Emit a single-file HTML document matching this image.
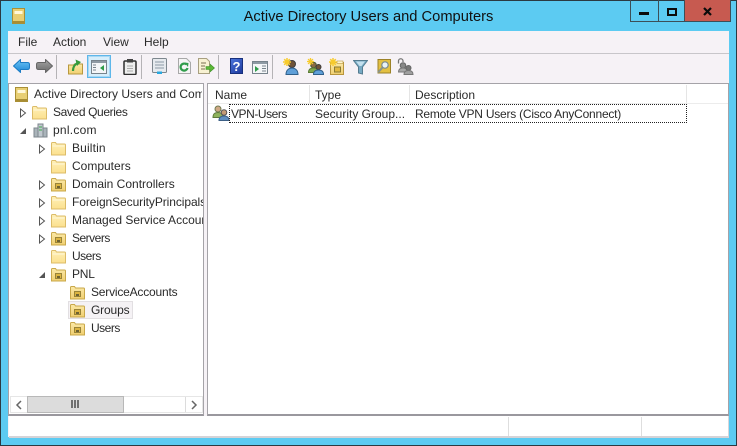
<!DOCTYPE html>
<html><head><meta charset="utf-8"><style>
html,body{margin:0;padding:0;width:737px;height:446px;overflow:hidden}
body{position:relative;background:#5ccbf2;font-family:"Liberation Sans",sans-serif;font-size:12px;color:#2a2a2a;filter:blur(.3px)}
.a,.t,svg{position:absolute}
.t{white-space:nowrap;line-height:16px;height:16px}
</style></head><body>
<svg width="0" height="0" style="left:0;top:0"><defs>
<linearGradient id="fg" x1="0" y1="0" x2="0" y2="1"><stop offset="0" stop-color="#fff0b8"/><stop offset="1" stop-color="#fbe08e"/></linearGradient>
<linearGradient id="og" x1="0" y1="0" x2="0" y2="1"><stop offset="0" stop-color="#fbe9a8"/><stop offset="1" stop-color="#f0cf70"/></linearGradient>
<linearGradient id="bl" x1="0" y1="0" x2="0" y2="1"><stop offset="0" stop-color="#6cc4f6"/><stop offset="1" stop-color="#1c86d6"/></linearGradient>
<linearGradient id="gr" x1="0" y1="0" x2="0" y2="1"><stop offset="0" stop-color="#a4a4a4"/><stop offset="1" stop-color="#6a6a6a"/></linearGradient>
<symbol id="f" viewBox="0 0 15 15"><path d="M.5 14V2.500q0-1 1-1h3l1 1.500h8q1 0 1 1V14z" fill="url(#fg)" stroke="#dcbc68"/><path d="M1.500 5h12" stroke="#fff8da"/></symbol>
<symbol id="o" viewBox="0 0 15 15"><path d="M.5 14V2.500q0-1 1-1h3l1 1.500h8q1 0 1 1V14z" fill="url(#og)" stroke="#c9a84a"/><rect x="4.500" y="6.500" width="6" height="5" fill="#dcb440" stroke="#9a8438"/><rect x="6" y="9" width="3" height="2" fill="#6e6232"/></symbol>
<symbol id="g" viewBox="0 0 18 16"><circle cx="6" cy="4" r="3" fill="#cfa985" stroke="#6f7a50"/><path d="M1 12.500c0-4 2-5 5-5s5 1 5 5z" fill="#8fb35c" stroke="#5f7a3c"/><circle cx="12" cy="7.500" r="2.800" fill="#c49a75" stroke="#555"/><path d="M7 15.500c0-3.500 2-4.500 5-4.500s5 1 5 4.500z" fill="#5f8fc0" stroke="#3c5f85"/></symbol>
<symbol id="s" viewBox="0 0 8 8"><path d="M4 0v8M0 4h8M1.200 1.200l5.600 5.600M6.800 1.200l-5.600 5.600" stroke="#f7cb2e" stroke-width="1.500"/></symbol>
</defs></svg>

<div class="a" style="left:0;top:0;width:737px;height:1px;background:#2b3a42"></div>
<div class="a" style="left:0;top:0;width:1px;height:446px;background:#2b3a42"></div>
<div class="a" style="left:736px;top:0;width:1px;height:446px;background:#2b3a42"></div>
<div class="a" style="left:0;top:445px;width:737px;height:1px;background:#2b3a42"></div>

<!-- title bar -->
<svg style="left:12px;top:8px" width="13" height="16" viewBox="0 0 13 16"><rect x=".5" y=".5" width="12" height="15" fill="#e8cf73" stroke="#a98f35"/><rect x="2.500" y="3" width="8" height="3" fill="#fff8d8"/><rect x="1" y="13" width="11" height="2" fill="#a88d33"/></svg>
<div class="t" style="left:0;top:8px;width:737px;text-align:center;font-size:14.700px;line-height:18px;height:18px;color:#111">Active Directory Users and Computers</div>
<div class="a" style="left:684px;top:0;width:47px;height:22px;background:#c75a50"></div>
<div class="a" style="left:630px;top:0;width:101px;height:22px;border:1px solid #3c4f58;border-top:0;box-sizing:border-box"></div>
<div class="a" style="left:658px;top:0;width:1px;height:21px;background:#3c4f58"></div>
<div class="a" style="left:684px;top:0;width:1px;height:21px;background:#3c4f58"></div>
<div class="a" style="left:639px;top:12px;width:10px;height:3px;background:#0c0c0c"></div>
<div class="a" style="left:667px;top:8px;width:10px;height:8px;border:2px solid #0c0c0c;box-sizing:border-box"></div>
<svg style="left:703px;top:7px" width="9" height="9" viewBox="0 0 9 9"><path d="M1 1l7 7M8 1L1 8" stroke="#0c0c0c" stroke-width="2.200"/></svg>

<!-- client -->
<div class="a" style="left:8px;top:31px;width:721px;height:406px;background:#f6f2f6"></div>
<!-- menu -->
<div class="t" style="left:18px;top:34px">File</div>
<div class="t" style="left:53px;top:34px">Action</div>
<div class="t" style="left:103px;top:34px">View</div>
<div class="t" style="left:144px;top:34px">Help</div>
<div class="a" style="left:8px;top:53px;width:721px;height:1px;background:#c8c6ca"></div>

<!-- toolbar -->
<svg style="left:13px;top:59px" width="17" height="14" viewBox="0 0 17 14"><path d="M.5 7L7.500.5v3h7q2 0 2 2v3q0 2-2 2h-7v3z" fill="url(#bl)" stroke="#1c7cc4" stroke-linejoin="round"/></svg>
<svg style="left:36px;top:59px" width="17" height="14" viewBox="0 0 17 14"><path d="M16.500 7L9.500.5v3h-7q-2 0-2 2v3q0 2 2 2h7v3z" fill="url(#gr)" stroke="#666" stroke-linejoin="round"/></svg>
<div class="a" style="left:56px;top:55px;width:1px;height:24px;background:#b5b3b6"></div>
<svg style="left:68px;top:59px" width="15" height="16" viewBox="0 0 15 16"><path d="M.5 15V6h5l1-1h8v10z" fill="url(#og)" stroke="#b8983e"/><path d="M5 12c0-4 2-7 5-8" fill="none" stroke="#359a3d" stroke-width="2.200"/><path d="M7.500.5L13 3 9 7z" fill="#359a3d"/></svg>
<div class="a" style="left:87px;top:55px;width:24px;height:23px;background:#d6eefb;border:1px solid #5eb7ea;outline:1px solid #a8d8f4;outline-offset:-2px;box-sizing:border-box"></div>
<svg style="left:91px;top:60px" width="16" height="14" viewBox="0 0 16 14"><rect x=".5" y=".5" width="15" height="13" fill="#f4f6f8" stroke="#77838c"/><rect x="1" y="1" width="14" height="2" fill="#8e9aa4"/><path d="M2 5h3M2 7.500h3M2 10h3" stroke="#77838c"/><path d="M13 5v6L9 8z" fill="#2f9c4a"/></svg>
<svg style="left:123px;top:59px" width="14" height="16" viewBox="0 0 14 16"><rect x="1" y="2" width="12" height="13.500" rx="1" fill="#eee" stroke="#2e2e2e" stroke-width="1.500"/><rect x="4" y="0" width="6" height="3.500" fill="#444"/><path d="M4 7h6M4 9.500h6M4 12h6" stroke="#aaa"/></svg>
<div class="a" style="left:141px;top:55px;width:1px;height:24px;background:#b5b3b6"></div>
<svg style="left:152px;top:58px" width="15" height="16" viewBox="0 0 15 16"><rect x=".5" y=".5" width="14" height="14" rx="1" fill="#e6eaee" stroke="#7d878e"/><path d="M3 4h9M3 7h9M3 10h9" stroke="#8c9aa6"/><rect x="5" y="13.500" width="5" height="2.500" fill="#28a8e0"/></svg>
<svg style="left:178px;top:58px" width="13" height="16" viewBox="0 0 13 16"><path d="M.5.500h8l4 4v11H.500z" fill="#f5f5f5" stroke="#a8a8a8"/><path d="M9.500 10a3.500 3.500 0 1 1-1-3.500" fill="none" stroke="#2f9c4a" stroke-width="2.200"/><path d="M6.500 4.500l4 .5-.5 4z" fill="#2f9c4a"/></svg>
<svg style="left:198px;top:58px" width="17" height="16" viewBox="0 0 17 16"><path d="M.5.500h8l3 3v12h-11z" fill="#f7f1d2" stroke="#a89f80"/><path d="M3 5h5M3 8h4M3 11h4" stroke="#7a7050"/><path d="M8 8.500h4V6l4.500 4-4.500 4v-2.500H8z" fill="#5cb838" stroke="#3f8f28" stroke-width=".6"/></svg>
<div class="a" style="left:218px;top:55px;width:1px;height:24px;background:#b5b3b6"></div>
<div class="a" style="left:230px;top:58px;width:13px;height:16px;background:linear-gradient(135deg,#4a74dc,#1f3a9c);border:1px solid #18307c;box-sizing:border-box;color:#fff;font:bold 13px/15px 'Liberation Sans',sans-serif;text-align:center">?</div>
<svg style="left:252px;top:61px" width="16" height="13" viewBox="0 0 16 13"><rect x=".5" y=".5" width="15" height="12" fill="#f4f6f8" stroke="#77838c"/><rect x="1" y="1" width="14" height="2" fill="#8e9aa4"/><path d="M3 5v6l4-3z" fill="#2f9c4a"/><path d="M10 5h4M10 7.500h4M10 10h4" stroke="#77838c"/></svg>
<div class="a" style="left:272px;top:55px;width:1px;height:24px;background:#b5b3b6"></div>
<svg style="left:283px;top:58px" width="16" height="17" viewBox="0 0 16 17"><circle cx="9" cy="6" r="3.500" fill="#6f5238" stroke="#3c3c3c"/><path d="M3 16.500c0-4.500 3-6.500 6-6.500s6 2 6 6.500z" fill="#5f9fd8" stroke="#2f5f8a"/><use href="#s" x="0" y="0" width="8" height="8"/></svg>
<svg style="left:307px;top:58px" width="17" height="17" viewBox="0 0 17 17"><circle cx="6.500" cy="7" r="2.800" fill="#8a6a45" stroke="#4a5a30"/><path d="M1.500 14.500c0-3 2-4.500 5-4.500s5 1.500 5 4.500z" fill="#7fa84e" stroke="#5a7a34"/><circle cx="11.500" cy="9" r="2.500" fill="#6f5238" stroke="#3c3c3c"/><path d="M6.500 16.500c0-3 2-4.500 5-4.500s5 1.500 5 4.500z" fill="#5f9fd8" stroke="#2f5f8a"/><use href="#s" x="0" y="0" width="7" height="7"/></svg>
<svg style="left:329px;top:58px" width="16" height="17" viewBox="0 0 16 17"><path d="M1.500 16.500V4.500h13v12z" fill="url(#og)" stroke="#b8953c"/><rect x="8" y="3" width="6" height="2.500" fill="#fff6d0" stroke="#b8953c" stroke-width=".6"/><rect x="5.500" y="9" width="6" height="5" fill="#e2b93f" stroke="#8a7a34"/><use href="#s" x="0" y="0" width="8" height="8"/></svg>
<svg style="left:353px;top:60px" width="15" height="15" viewBox="0 0 15 15"><path d="M.5.500h14L9.500 7v7l-4-1V7z" fill="#77aac4" stroke="#557c90"/><path d="M3 1.500h9L8.500 6h-2z" fill="#c4e0ee"/></svg>
<svg style="left:377px;top:59px" width="14" height="15" viewBox="0 0 14 15"><rect x="1" y=".5" width="12.500" height="13.500" fill="#e3c042" stroke="#9c8228"/><circle cx="8" cy="6" r="3.200" fill="#eaf3f6" stroke="#7a8a92" stroke-width="1.200"/><path d="M5.500 8.500L1 13.500" stroke="#8a9488" stroke-width="2"/></svg>
<svg style="left:397px;top:58px" width="17" height="17" viewBox="0 0 17 17"><path d="M1.500 5.500V3a2.200 2.200 0 0 1 4.500 0v1" fill="none" stroke="#777" stroke-width="1.300"/><circle cx="6" cy="7.500" r="2.800" fill="#888" stroke="#666"/><path d="M1.500 14c0-3 2-4 4.500-4s4.500 1 4.500 4z" fill="#a8a8a8" stroke="#777"/><circle cx="11.500" cy="10" r="2.500" fill="#777" stroke="#666"/><path d="M7 16.500c0-3 2-4 4.500-4s4.500 1 4.500 4z" fill="#a0a0a0" stroke="#777"/></svg>

<!-- panels -->
<div class="a" style="left:8px;top:83px;width:196px;height:333px;background:#fff;border:1px solid #a5a3a8;border-bottom:2px solid #9a989e;box-sizing:border-box"></div>
<div class="a" style="left:207px;top:83px;width:522px;height:333px;background:#fff;border:1px solid #a5a3a8;border-bottom:2px solid #9a989e;box-sizing:border-box"></div>

<!-- tree -->
<svg style="left:15px;top:87px" width="13" height="15" viewBox="0 0 13 15"><rect x=".5" y=".5" width="12" height="14" fill="#e8cf73" stroke="#a98f35"/><rect x="2.500" y="3" width="8" height="3" fill="#fff8d8"/><rect x="1" y="12" width="11" height="2" fill="#a88d33"/></svg>
<div class="t" style="left:34px;top:86px;width:168px;overflow:hidden">Active Directory Users and Computers</div>

<svg style="left:19px;top:108px" width="8" height="10" viewBox="0 0 8 10"><path d="M1.500 1l5 4-5 4z" fill="#fff" stroke="#555"/></svg>
<svg style="left:32px;top:105px" width="15" height="15"><use href="#f"/></svg>
<div class="t" style="left:53px;top:104px;letter-spacing:-.38px">Saved Queries</div>

<svg style="left:19px;top:126px" width="8" height="9" viewBox="0 0 8 9"><path d="M7 2v6H1z" fill="#555"/></svg>
<svg style="left:33px;top:122px" width="15" height="16" viewBox="0 0 15 16"><rect x="1" y="6" width="4" height="9" fill="#aab4ba" stroke="#7c868c"/><rect x="5" y="2" width="5" height="13" fill="#c0c8ce" stroke="#7c868c"/><rect x="10" y="6" width="4" height="9" fill="#aab4ba" stroke="#7c868c"/><path d="M6 5h3M6 8h3" stroke="#3da84a"/></svg>
<div class="t" style="left:53px;top:122px;letter-spacing:.25px">pnl.com</div>

<svg style="left:38px;top:144px" width="8" height="10" viewBox="0 0 8 10"><path d="M1.500 1l5 4-5 4z" fill="#fff" stroke="#555"/></svg>
<svg style="left:51px;top:141px" width="15" height="15"><use href="#f"/></svg>
<div class="t" style="left:72px;top:140px;letter-spacing:.15px">Builtin</div>

<svg style="left:51px;top:159px" width="15" height="15"><use href="#f"/></svg>
<div class="t" style="left:72px;top:158px">Computers</div>

<svg style="left:38px;top:180px" width="8" height="10" viewBox="0 0 8 10"><path d="M1.500 1l5 4-5 4z" fill="#fff" stroke="#555"/></svg>
<svg style="left:51px;top:177px" width="15" height="15"><use href="#o"/></svg>
<div class="t" style="left:72px;top:176px">Domain Controllers</div>

<svg style="left:38px;top:198px" width="8" height="10" viewBox="0 0 8 10"><path d="M1.500 1l5 4-5 4z" fill="#fff" stroke="#555"/></svg>
<svg style="left:51px;top:195px" width="15" height="15"><use href="#f"/></svg>
<div class="t" style="left:72px;top:194px;width:131px;overflow:hidden;letter-spacing:-.08px">ForeignSecurityPrincipals</div>

<svg style="left:38px;top:216px" width="8" height="10" viewBox="0 0 8 10"><path d="M1.500 1l5 4-5 4z" fill="#fff" stroke="#555"/></svg>
<svg style="left:51px;top:213px" width="15" height="15"><use href="#f"/></svg>
<div class="t" style="left:72px;top:212px;width:131px;overflow:hidden">Managed Service Accounts</div>

<svg style="left:38px;top:234px" width="8" height="10" viewBox="0 0 8 10"><path d="M1.500 1l5 4-5 4z" fill="#fff" stroke="#555"/></svg>
<svg style="left:51px;top:231px" width="15" height="15"><use href="#o"/></svg>
<div class="t" style="left:72px;top:230px;letter-spacing:-.5px">Servers</div>

<svg style="left:51px;top:249px" width="15" height="15"><use href="#f"/></svg>
<div class="t" style="left:72px;top:248px;letter-spacing:-.5px">Users</div>

<svg style="left:38px;top:270px" width="8" height="9" viewBox="0 0 8 9"><path d="M7 2v6H1z" fill="#555"/></svg>
<svg style="left:51px;top:267px" width="15" height="15"><use href="#o"/></svg>
<div class="t" style="left:72px;top:266px;letter-spacing:-.2px">PNL</div>

<svg style="left:70px;top:285px" width="15" height="15"><use href="#o"/></svg>
<div class="t" style="left:91px;top:284px;letter-spacing:-.2px">ServiceAccounts</div>

<div class="a" style="left:68px;top:301px;width:65px;height:18px;background:#f5f2f5;border:1px solid #e2dfe2;box-sizing:border-box"></div>
<svg style="left:70px;top:303px" width="15" height="15"><use href="#o"/></svg>
<div class="t" style="left:91px;top:302px;letter-spacing:-.15px">Groups</div>

<svg style="left:70px;top:321px" width="15" height="15"><use href="#o"/></svg>
<div class="t" style="left:91px;top:320px;letter-spacing:-.5px">Users</div>

<!-- scrollbar -->
<div class="a" style="left:10px;top:396px;width:193px;height:17px;background:#fff;border:1px solid #e6e6e6;box-sizing:border-box"></div>
<div class="a" style="left:27px;top:396px;width:97px;height:17px;background:#dcdcdc;border:1px solid #b8b8b8;box-sizing:border-box"></div>
<div class="a" style="left:185px;top:397px;width:1px;height:15px;background:#dcdcdc"></div>
<svg style="left:15px;top:400px" width="8" height="10" viewBox="0 0 8 10"><path d="M6 1L2 5l4 4" fill="none" stroke="#666" stroke-width="1.500"/></svg>
<svg style="left:190px;top:400px" width="8" height="10" viewBox="0 0 8 10"><path d="M2 1l4 4-4 4" fill="none" stroke="#666" stroke-width="1.500"/></svg>
<svg style="left:71px;top:400px" width="8" height="8" viewBox="0 0 8 8"><path d="M1 0v8M4 0v8M7 0v8" stroke="#555" stroke-width="1.600"/></svg>

<!-- list header -->
<div class="a" style="left:208px;top:103px;width:520px;height:1px;background:#ececec"></div>
<div class="a" style="left:309px;top:85px;width:1px;height:18px;background:#e5e5e5"></div>
<div class="a" style="left:409px;top:85px;width:1px;height:18px;background:#e5e5e5"></div>
<div class="a" style="left:686px;top:85px;width:1px;height:18px;background:#e5e5e5"></div>
<div class="t" style="left:215px;top:87px">Name</div>
<div class="t" style="left:315px;top:87px">Type</div>
<div class="t" style="left:415px;top:87px">Description</div>

<!-- row -->
<svg style="left:212px;top:105px" width="18" height="16"><use href="#g"/></svg>
<div class="a" style="left:229px;top:104px;width:458px;height:19px;border:1px dotted #222;box-sizing:border-box"></div>
<div class="t" style="left:231px;top:106px;letter-spacing:-.45px">VPN-Users</div>
<div class="t" style="left:315px;top:106px">Security Group...</div>
<div class="t" style="left:415px;top:106px;letter-spacing:-.23px">Remote VPN Users (Cisco AnyConnect)</div>

<!-- status -->
<div class="a" style="left:9px;top:416px;width:720px;height:22px;background:#fff;border-right:1px solid #d8d6da;border-bottom:2px solid #d5d3d7;box-sizing:border-box"></div>
<div class="a" style="left:508px;top:417px;width:1px;height:19px;background:#dedede"></div>
<div class="a" style="left:641px;top:417px;width:1px;height:19px;background:#dedede"></div>
</body></html>
